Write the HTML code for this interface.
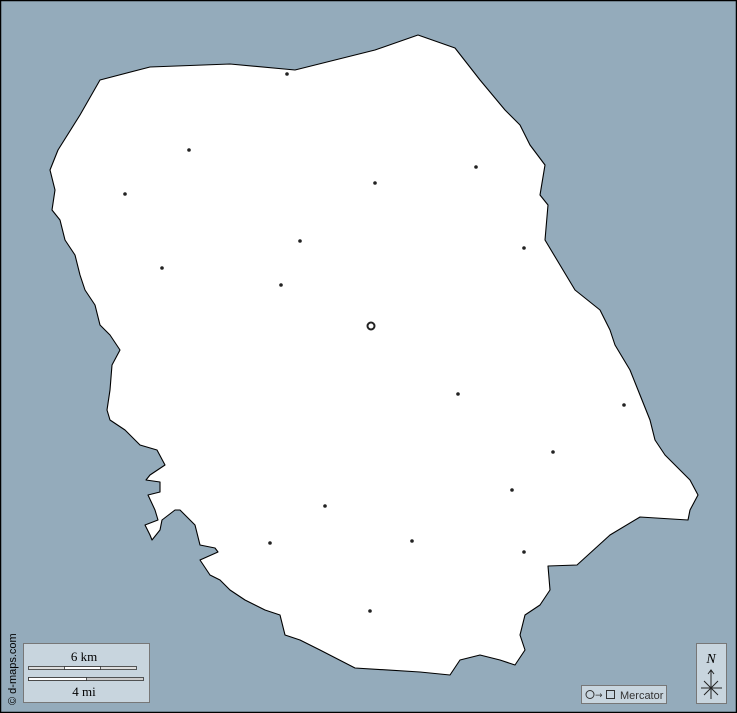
<!DOCTYPE html>
<html><head><meta charset="utf-8"><style>
html,body{margin:0;padding:0;width:737px;height:713px;overflow:hidden;background:#94abbb}
svg{display:block}
</style></head><body>
<svg width="737" height="713" viewBox="0 0 737 713" xmlns="http://www.w3.org/2000/svg">
<rect x="0" y="0" width="737" height="713" fill="#94abbb"/>
<polygon fill="#fff" stroke="#000" stroke-width="1.1" stroke-linejoin="round" points="418,35 455,48 480,80 505,110 520,125 530,145 545,165 540,195 548,205 545,240 560,265 575,290 600,310 610,330 615,345 630,370 640,395 650,420 655,440 665,455 680,470 690,480 698,495 690,510 688,520 640,517 610,535 577,565 548,566 550,590 540,605 525,615 520,635 525,650 515,665 500,660 480,655 460,660 450,675 420,672 355,668 320,650 300,640 285,635 280,615 265,610 245,600 230,590 220,580 210,575 200,560 218,552 215,548 200,545 195,525 185,515 180,510 175,510 162,520 160,530 152,540 150,535 145,525 158,520 155,510 148,495 160,492 160,482 146,480 150,475 165,465 157,450 140,445 125,430 110,420 107,410 110,390 112,365 120,350 110,335 100,325 95,305 85,290 80,275 75,255 65,240 60,220 52,210 55,190 50,170 58,150 80,115 100,80 150,67 230,64 295,70 375,50"/>
<g fill="#222">
<circle cx="287" cy="74" r="1.8"/><circle cx="189" cy="150" r="1.8"/><circle cx="125" cy="194" r="1.8"/>
<circle cx="375" cy="183" r="1.8"/><circle cx="476" cy="167" r="1.8"/><circle cx="300" cy="241" r="1.8"/>
<circle cx="524" cy="248" r="1.8"/><circle cx="162" cy="268" r="1.8"/><circle cx="281" cy="285" r="1.8"/>
<circle cx="458" cy="394" r="1.8"/><circle cx="624" cy="405" r="1.8"/><circle cx="553" cy="452" r="1.8"/>
<circle cx="512" cy="490" r="1.8"/><circle cx="325" cy="506" r="1.8"/><circle cx="270" cy="543" r="1.8"/>
<circle cx="412" cy="541" r="1.8"/><circle cx="524" cy="552" r="1.8"/><circle cx="370" cy="611" r="1.8"/>
</g>
<circle cx="371" cy="326" r="3.5" fill="#fff" stroke="#222" stroke-width="2"/>
<rect x="23.5" y="643.5" width="126" height="59" fill="#c8d5de" stroke="#777"/>
<text x="84" y="661" font-family="Liberation Serif,serif" font-size="13" text-anchor="middle" fill="#000">6 km</text>
<rect x="28.5" y="666.5" width="108" height="3" fill="#ddd" stroke="#333" stroke-width="0.8"/>
<rect x="64.5" y="666.5" width="36" height="3" fill="#fff" stroke="#333" stroke-width="0.8"/>
<rect x="28.5" y="677.5" width="115" height="3" fill="#ccc" stroke="#333" stroke-width="0.8"/>
<rect x="28.5" y="677.5" width="58" height="3" fill="#fff" stroke="#333" stroke-width="0.8"/>
<text x="84" y="696" font-family="Liberation Serif,serif" font-size="13" text-anchor="middle" fill="#000">4 mi</text>
<text transform="translate(16,705) rotate(-90)" font-family="Liberation Sans,sans-serif" font-size="11" fill="#000">© d-maps.com</text>
<rect x="581.5" y="685.5" width="85" height="18" fill="#c8d5de" stroke="#777"/>
<circle cx="590" cy="694.5" r="4" fill="none" stroke="#333"/>
<text x="595" y="698" font-family="DejaVu Sans,sans-serif" font-size="9" fill="#333">→</text>
<rect x="606.5" y="690.5" width="8" height="8" fill="none" stroke="#333"/>
<text x="620" y="699" font-family="Liberation Sans,sans-serif" font-size="11" fill="#333">Mercator</text>
<rect x="696.5" y="643.5" width="30" height="60" fill="#c8d5de" stroke="#777"/>
<text x="711" y="663" font-family="Liberation Serif,serif" font-style="italic" font-size="14" text-anchor="middle" fill="#000">N</text>
<g stroke="#222" stroke-width="1" fill="none">
<line x1="711" y1="670" x2="711" y2="699"/><polyline points="708,674 711,670 714,674"/>
<line x1="701" y1="688" x2="722" y2="688"/><line x1="704" y1="681" x2="718" y2="695"/><line x1="718" y1="681" x2="704" y2="695"/>
</g>
<rect x="0.5" y="0.5" width="736" height="712" fill="none" stroke="#000" stroke-width="1.5"/>
</svg>
</body></html>
